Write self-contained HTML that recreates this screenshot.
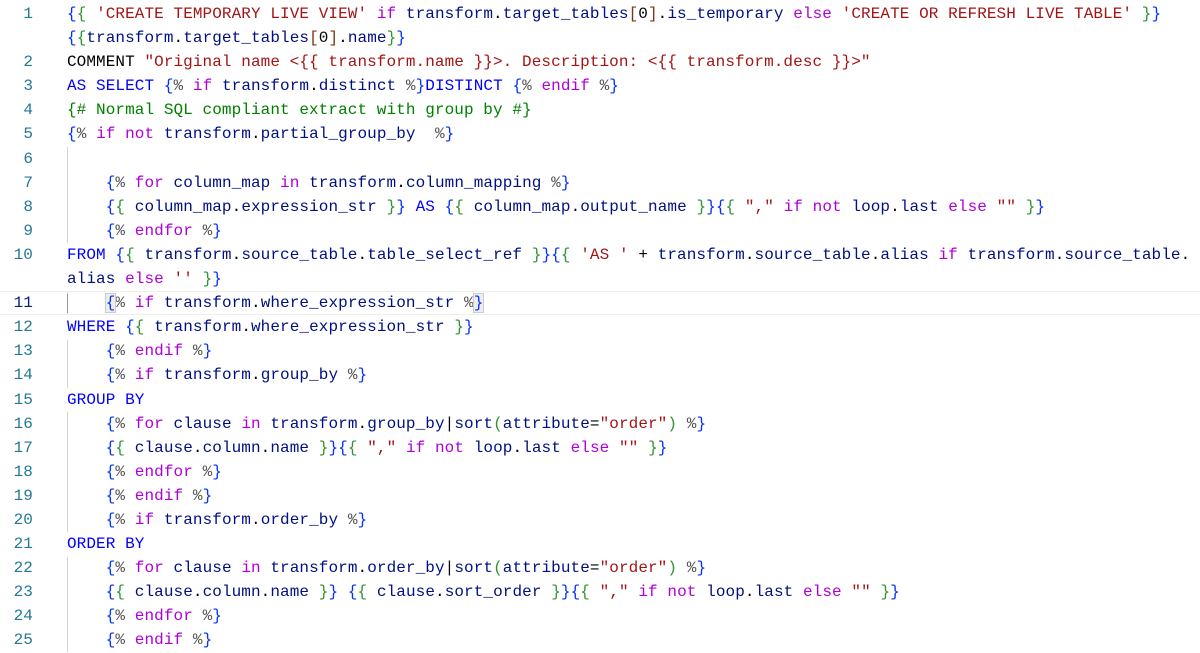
<!DOCTYPE html>
<html><head><meta charset="utf-8"><style>
body{margin:0;background:#fff;width:1200px;height:652px;overflow:hidden;font-family:"Liberation Mono",monospace;font-size:16px;letter-spacing:0.08px;}
.r{position:relative;height:24.1px;line-height:24.1px;white-space:pre;color:#000;}
.n{position:absolute;left:0;width:33px;text-align:right;color:#237893;font-size:16px;}
.t{position:absolute;left:67px;}
.cur .n{color:#0b216f}
.b{color:#0431fa}.g{color:#319331}.o{color:#7b3814}
.k{color:#af00db}.v{color:#001080}.s{color:#a31515}.q{color:#0000ff}.c{color:#008000}.p{color:#555}
.guide{position:absolute;left:67px;width:1px;background:#d3d3d3}
</style></head><body>
<div style="padding-top:2px;position:relative">
<div class="guide" style="top:147px;height:96px"></div>
<div class="guide" style="top:291px;height:24px"></div>
<div class="guide" style="top:340px;height:48px"></div>
<div class="guide" style="top:412px;height:120px"></div>
<div class="guide" style="top:557px;height:95px"></div>
<div class="r"><span class="n">1</span><span class="t"><span class="b">{</span><span class="g">{</span> <span class="s">'CREATE TEMPORARY LIVE VIEW'</span> <span class="k">if</span> <span class="v">transform</span>.<span class="v">target_tables</span><span class="o">[</span>0<span class="o">]</span>.<span class="v">is_temporary</span> <span class="k">else</span> <span class="s">'CREATE OR REFRESH LIVE TABLE'</span> <span class="g">}</span><span class="b">}</span></span></div>
<div class="r"><span class="t"><span class="b">{</span><span class="g">{</span><span class="v">transform</span>.<span class="v">target_tables</span><span class="o">[</span>0<span class="o">]</span>.<span class="v">name</span><span class="g">}</span><span class="b">}</span></span></div>
<div class="r"><span class="n">2</span><span class="t">COMMENT <span class="s">"Original name &lt;{{ transform.name }}&gt;. Description: &lt;{{ transform.desc }}&gt;"</span></span></div>
<div class="r"><span class="n">3</span><span class="t"><span class="q">AS SELECT</span> <span class="b">{</span><span class="p">%</span> <span class="k">if</span> <span class="v">transform</span>.<span class="v">distinct</span> <span class="p">%</span><span class="b">}</span><span class="q">DISTINCT</span> <span class="b">{</span><span class="p">%</span> <span class="k">endif</span> <span class="p">%</span><span class="b">}</span></span></div>
<div class="r"><span class="n">4</span><span class="t c">{# Normal SQL compliant extract with group by #}</span></div>
<div class="r"><span class="n">5</span><span class="t"><span class="b">{</span><span class="p">%</span> <span class="k">if not</span> <span class="v">transform</span>.<span class="v">partial_group_by</span>  <span class="p">%</span><span class="b">}</span></span></div>
<div class="r"><span class="n">6</span><span class="t"></span></div>
<div class="r"><span class="n">7</span><span class="t">    <span class="b">{</span><span class="p">%</span> <span class="k">for</span> <span class="v">column_map</span> <span class="k">in</span> <span class="v">transform</span>.<span class="v">column_mapping</span> <span class="p">%</span><span class="b">}</span></span></div>
<div class="r"><span class="n">8</span><span class="t">    <span class="b">{</span><span class="g">{</span> <span class="v">column_map</span>.<span class="v">expression_str</span> <span class="g">}</span><span class="b">}</span> <span class="q">AS</span> <span class="b">{</span><span class="g">{</span> <span class="v">column_map</span>.<span class="v">output_name</span> <span class="g">}</span><span class="b">}</span><span class="b">{</span><span class="g">{</span> <span class="s">","</span> <span class="k">if not</span> <span class="v">loop</span>.<span class="v">last</span> <span class="k">else</span> <span class="s">""</span> <span class="g">}</span><span class="b">}</span></span></div>
<div class="r"><span class="n">9</span><span class="t">    <span class="b">{</span><span class="p">%</span> <span class="k">endfor</span> <span class="p">%</span><span class="b">}</span></span></div>
<div class="r"><span class="n">10</span><span class="t"><span class="q">FROM</span> <span class="b">{</span><span class="g">{</span> <span class="v">transform</span>.<span class="v">source_table</span>.<span class="v">table_select_ref</span> <span class="g">}</span><span class="b">}</span><span class="b">{</span><span class="g">{</span> <span class="s">'AS '</span> + <span class="v">transform</span>.<span class="v">source_table</span>.<span class="v">alias</span> <span class="k">if</span> <span class="v">transform</span>.<span class="v">source_table</span>.</span></div>
<div class="r"><span class="t"><span class="v">alias</span> <span class="k">else</span> <span class="s">''</span> <span class="g">}</span><span class="b">}</span></span></div>
<div class="r cur" style="border-top:1px solid #eee;border-bottom:1px solid #eee;height:22.1px;line-height:22.1px"><span class="n">11</span><span class="t">    <span class="b" style="background:#eee;outline:1px solid #ccc">{</span><span class="p">%</span> <span class="k">if</span> <span class="v">transform</span>.<span class="v">where_expression_str</span> <span class="p">%</span><span class="b" style="background:#eee;outline:1px solid #ccc">}</span></span><span style="position:absolute;left:67px;top:2px;width:1px;height:19px;background:#999"></span></div>
<div class="r"><span class="n">12</span><span class="t"><span class="q">WHERE</span> <span class="b">{</span><span class="g">{</span> <span class="v">transform</span>.<span class="v">where_expression_str</span> <span class="g">}</span><span class="b">}</span></span></div>
<div class="r"><span class="n">13</span><span class="t">    <span class="b">{</span><span class="p">%</span> <span class="k">endif</span> <span class="p">%</span><span class="b">}</span></span></div>
<div class="r"><span class="n">14</span><span class="t">    <span class="b">{</span><span class="p">%</span> <span class="k">if</span> <span class="v">transform</span>.<span class="v">group_by</span> <span class="p">%</span><span class="b">}</span></span></div>
<div class="r"><span class="n">15</span><span class="t"><span class="q">GROUP BY</span></span></div>
<div class="r"><span class="n">16</span><span class="t">    <span class="b">{</span><span class="p">%</span> <span class="k">for</span> <span class="v">clause</span> <span class="k">in</span> <span class="v">transform</span>.<span class="v">group_by</span>|<span class="v">sort</span><span class="g">(</span><span class="v">attribute</span>=<span class="s">"order"</span><span class="g">)</span> <span class="p">%</span><span class="b">}</span></span></div>
<div class="r"><span class="n">17</span><span class="t">    <span class="b">{</span><span class="g">{</span> <span class="v">clause</span>.<span class="v">column</span>.<span class="v">name</span> <span class="g">}</span><span class="b">}</span><span class="b">{</span><span class="g">{</span> <span class="s">","</span> <span class="k">if not</span> <span class="v">loop</span>.<span class="v">last</span> <span class="k">else</span> <span class="s">""</span> <span class="g">}</span><span class="b">}</span></span></div>
<div class="r"><span class="n">18</span><span class="t">    <span class="b">{</span><span class="p">%</span> <span class="k">endfor</span> <span class="p">%</span><span class="b">}</span></span></div>
<div class="r"><span class="n">19</span><span class="t">    <span class="b">{</span><span class="p">%</span> <span class="k">endif</span> <span class="p">%</span><span class="b">}</span></span></div>
<div class="r"><span class="n">20</span><span class="t">    <span class="b">{</span><span class="p">%</span> <span class="k">if</span> <span class="v">transform</span>.<span class="v">order_by</span> <span class="p">%</span><span class="b">}</span></span></div>
<div class="r"><span class="n">21</span><span class="t"><span class="q">ORDER BY</span></span></div>
<div class="r"><span class="n">22</span><span class="t">    <span class="b">{</span><span class="p">%</span> <span class="k">for</span> <span class="v">clause</span> <span class="k">in</span> <span class="v">transform</span>.<span class="v">order_by</span>|<span class="v">sort</span><span class="g">(</span><span class="v">attribute</span>=<span class="s">"order"</span><span class="g">)</span> <span class="p">%</span><span class="b">}</span></span></div>
<div class="r"><span class="n">23</span><span class="t">    <span class="b">{</span><span class="g">{</span> <span class="v">clause</span>.<span class="v">column</span>.<span class="v">name</span> <span class="g">}</span><span class="b">}</span> <span class="b">{</span><span class="g">{</span> <span class="v">clause</span>.<span class="v">sort_order</span> <span class="g">}</span><span class="b">}</span><span class="b">{</span><span class="g">{</span> <span class="s">","</span> <span class="k">if not</span> <span class="v">loop</span>.<span class="v">last</span> <span class="k">else</span> <span class="s">""</span> <span class="g">}</span><span class="b">}</span></span></div>
<div class="r"><span class="n">24</span><span class="t">    <span class="b">{</span><span class="p">%</span> <span class="k">endfor</span> <span class="p">%</span><span class="b">}</span></span></div>
<div class="r"><span class="n">25</span><span class="t">    <span class="b">{</span><span class="p">%</span> <span class="k">endif</span> <span class="p">%</span><span class="b">}</span></span></div>
</div>
</body></html>
